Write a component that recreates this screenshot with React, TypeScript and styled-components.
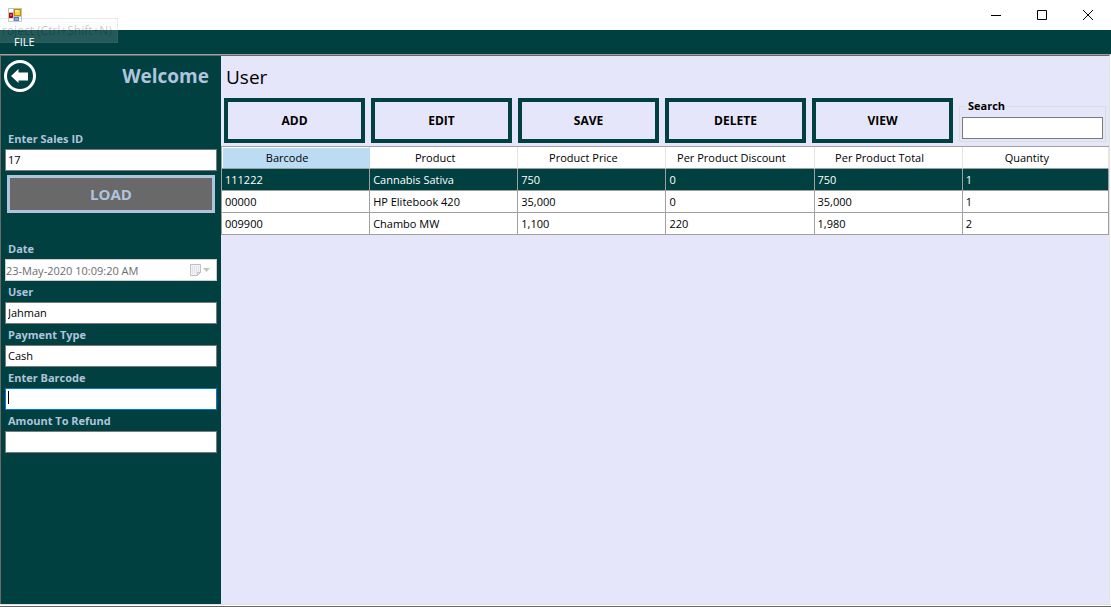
import React from "react";
import styled, { createGlobalStyle, css } from "styled-components";

const teal = "#004040";
const lavender = "#e6e6fa";
const steel = "#b0c4de";
const line = "#a0a0a0";
const font = `"Open Sans", "Noto Sans", sans-serif`;

const GlobalStyle = createGlobalStyle`
  *, *::before, *::after { box-sizing: border-box; }
  body { margin: 0; background: #fff; font-family: ${font}; font-size: 11px; color: #000; }
  button, input { font-family: inherit; font-size: inherit; border-radius: 0; }
`;

const Window = styled.div`
  position: relative;
  display: flex;
  flex-direction: column;
  min-height: 100vh;
  overflow: hidden;
`;

const TitleBar = styled.header`
  display: flex;
  align-items: center;
  justify-content: space-between;
  height: 30px;
  padding-left: 8px;
  background: #fff;
`;

const WindowControls = styled.div`
  display: flex;
`;

const WindowButton = styled.button`
  display: grid;
  place-items: center;
  width: 46px;
  height: 28px;
  padding: 0;
  border: 0;
  background: none;
`;

const MenuBar = styled.nav`
  display: flex;
  align-items: center;
  height: 24px;
  padding-left: 10px;
  background: ${teal};
`;

const MenuButton = styled.button`
  position: relative;
  z-index: 2;
  padding: 0 4px;
  border: 0;
  background: none;
  color: #fff;
  line-height: 12px;
`;

const Tooltip = styled.div`
  position: absolute;
  z-index: 1;
  top: 18px;
  left: -1px;
  width: 119px;
  height: 25px;
  padding: 6px 0 0 2px;
  border: 1px solid rgba(118, 118, 118, 0.15);
  background: rgba(242, 242, 242, 0.15);
  color: rgba(0, 0, 0, 0.22);
  font-size: 12px;
  line-height: 12px;
  white-space: nowrap;
`;

const Client = styled.div`
  flex: 1;
  display: flex;
  border-top: 1px solid ${line};
  border-right: 1px solid #fff;
`;

const Sidebar = styled.aside`
  flex: 0 0 221px;
  padding: 4px 4px 0 4px;
  border-top: 1px solid #696969;
  border-left: 1px solid #696969;
  background: ${teal};
`;

const SidebarHead = styled.div`
  display: flex;
  justify-content: space-between;
  align-items: center;
  height: 32px;
  margin-bottom: 36px;
  padding-right: 8px;
`;

const BackButton = styled.button`
  display: flex;
  margin-left: -1px;
  padding: 0;
  border: 0;
  background: none;
`;

const Welcome = styled.h1`
  margin: 0;
  color: ${steel};
  font-size: 19px;
  font-weight: 700;
  line-height: 34px;
`;

const Label = styled.label`
  display: block;
  padding-left: 3px;
  color: ${steel};
  font-size: 11px;
  font-weight: 700;
  line-height: 21px;
`;

const Field = styled.div`
  position: relative;
`;

const TextBox = styled.input<{ $active?: boolean }>`
  display: block;
  width: 100%;
  height: 22px;
  padding: 0 2px 1px;
  border: 1px solid ${(p) => (p.$active ? "#0078d7" : "#7a7a7a")};
  background: #fff;
  color: #000;
  outline: 0;
  &:disabled {
    padding: 0;
    border-color: #ccc;
    color: #6d6d6d;
    opacity: 1;
  }
`;

const Caret = styled.span`
  position: absolute;
  top: 3px;
  left: 3px;
  width: 1px;
  height: 13px;
  background: #000;
`;

const PickerIcon = styled.svg`
  position: absolute;
  top: 5px;
  right: 6px;
`;

const LoadButton = styled.button`
  display: block;
  width: calc(100% - 4px);
  height: 38px;
  margin: 4px 2px 25px;
  border: 3px solid ${steel};
  background: #696969;
  color: ${steel};
  font-size: 15px;
  font-weight: 700;
`;

const Main = styled.main`
  flex: 1;
  min-width: 0;
  border-top: 1px solid #696969;
  border-right: 1px solid #e3e3e3;
  background: ${lavender};
`;

const Heading = styled.h2`
  margin: 0;
  padding-left: 5px;
  font-size: 19px;
  font-weight: 400;
  line-height: 42px;
`;

const Toolbar = styled.div`
  display: flex;
  gap: 6px;
  padding: 0 3px;
`;

const ActionButton = styled.button`
  flex: 1 1 141px;
  height: 45px;
  padding: 0;
  border: 4px solid ${teal};
  background: ${lavender};
  color: #000;
  font-size: 12px;
  font-weight: 700;
`;

const SearchGroup = styled.fieldset`
  flex: 1 1 147px;
  min-width: 0;
  height: 44px;
  margin: 0;
  padding: 3px 2px 2px;
  border: 1px solid #dcdcdc;
`;

const Legend = styled.legend`
  margin-left: 4px;
  padding: 0 2px;
  font-size: 11px;
  font-weight: 700;
  line-height: 16px;
`;

const Grid = styled.table`
  width: 100%;
  margin-top: 3px;
  table-layout: fixed;
  border-collapse: separate;
  border-spacing: 0;
  border-top: 1px solid ${line};
  border-left: 1px solid ${line};
  background: #fff;
`;

const HeadCell = styled.th<{ $sorted: boolean }>`
  width: 16.7%;
  height: 22px;
  padding: 0 17px 0 0;
  border-right: 1px solid #e5e5e5;
  border-bottom: 1px solid ${line};
  font-weight: 400;
  line-height: 20px;
  white-space: nowrap;
  &:last-child {
    width: auto;
  }
  ${(p) =>
    p.$sorted &&
    css`
      border-right-color: #bcdcf4;
      background: #bcdcf4;
      box-shadow: inset 1px 1px #fff;
    `}
`;

const Row = styled.tr<{ $selected: boolean }>`
  background: ${(p) => (p.$selected ? teal : "#fff")};
  color: ${(p) => (p.$selected ? "#fff" : "#000")};
`;

const Cell = styled.td`
  height: 22px;
  padding: 0 3px;
  border-right: 1px solid ${line};
  border-bottom: 1px solid ${line};
  line-height: 20px;
  white-space: nowrap;
`;

const BottomEdge = styled.footer`
  height: 3px;
  border-top: 1px solid #e3e3e3;
  border-bottom: 1px solid #696969;
  background: #fff;
`;

const columns = [
  "Barcode",
  "Product",
  "Product Price",
  "Per Product Discount",
  "Per Product Total",
  "Quantity",
];

const rows = [
  ["111222", "Cannabis Sativa", "750", "0", "750", "1"],
  ["00000", "HP Elitebook 420", "35,000", "0", "35,000", "1"],
  ["009900", "Chambo MW", "1,100", "220", "1,980", "2"],
];

const AppIcon = () => (
  <svg width="14" height="14" viewBox="0 0 14 14" shapeRendering="crispEdges" aria-hidden="true">
    <rect width="14" height="14" fill="#c3c3c3" />
    <rect x="1" y="1" width="4" height="3" fill="#fff" />
    <rect x="1" y="10" width="4" height="3" fill="#fff" />
    <rect x="1" y="5" width="4" height="5" fill="#a80f10" />
    <rect x="2" y="6" width="2" height="2" fill="#e0564c" />
    <rect x="6" y="1" width="7" height="7" fill="#c58a00" />
    <rect x="7" y="2" width="5" height="5" fill="#ffd23f" />
    <rect x="7" y="2" width="3" height="2" fill="#ffe88e" />
    <rect x="6" y="9" width="5" height="4" fill="#3f73d0" />
    <rect x="7" y="10" width="3" height="2" fill="#7fa8ee" />
    <rect x="11" y="9" width="2" height="4" fill="#fff" />
  </svg>
);

const BackIcon = () => (
  <svg width="32" height="32" viewBox="0 0 32 32" aria-hidden="true">
    <circle cx="16" cy="16" r="14.5" fill="none" stroke="#fff" strokeWidth="3" />
    <path d="M7 16 14.5 9v3.5H24v8h-9.500V23z" fill="#fff" />
  </svg>
);

const CalendarIcon = () => (
  <PickerIcon width="21" height="13" viewBox="0 0 21 13" aria-hidden="true">
    <path d="M.5.5h10v8l-3 3h-7z" fill="#f4f4f4" stroke="#c4bebe" />
    <path d="M7.500 11.500v-3h3" fill="none" stroke="#c4bebe" />
    <path d="M2 3h7M2 5h7M2 7h7M2 9h5" stroke="#cdd0da" strokeDasharray="1 1" />
    <path d="M13 4h7l-3.500 4z" fill="#c4c4bc" />
  </PickerIcon>
);

export default function App() {
  return (
    <>
      <GlobalStyle />
      <Window>
        <TitleBar>
          <AppIcon />
          <WindowControls>
            <WindowButton aria-label="Minimize">
              <svg width="10" height="10"><path d="M0 5.500h10" stroke="#000" /></svg>
            </WindowButton>
            <WindowButton aria-label="Maximize">
              <svg width="10" height="10"><path d="M.5.5h9v9h-9z" fill="none" stroke="#000" /></svg>
            </WindowButton>
            <WindowButton aria-label="Close">
              <svg width="10" height="10"><path d="M0 0l10 10M10 0L0 10" stroke="#000" /></svg>
            </WindowButton>
          </WindowControls>
        </TitleBar>
        <MenuBar>
          <MenuButton>FILE</MenuButton>
        </MenuBar>
        <Tooltip>roject (Ctrl+Shift+N)</Tooltip>

        <Client>
          <Sidebar>
            <SidebarHead>
              <BackButton aria-label="Back">
                <BackIcon />
              </BackButton>
              <Welcome>Welcome</Welcome>
            </SidebarHead>

            <Label htmlFor="sales-id">Enter Sales ID</Label>
            <TextBox id="sales-id" defaultValue="17" />
            <LoadButton>LOAD</LoadButton>

            <Label htmlFor="date">Date</Label>
            <Field>
              <TextBox id="date" defaultValue="23-May-2020 10:09:20 AM" disabled />
              <CalendarIcon />
            </Field>
            <Label htmlFor="user">User</Label>
            <TextBox id="user" defaultValue="Jahman" />
            <Label htmlFor="payment">Payment Type</Label>
            <TextBox id="payment" defaultValue="Cash" />
            <Label htmlFor="barcode">Enter Barcode</Label>
            <Field>
              <TextBox id="barcode" $active />
              <Caret />
            </Field>
            <Label htmlFor="refund">Amount To Refund</Label>
            <TextBox id="refund" />
          </Sidebar>

          <Main>
            <Heading>User</Heading>
            <Toolbar>
              {["ADD", "EDIT", "SAVE", "DELETE", "VIEW"].map((name) => (
                <ActionButton key={name}>{name}</ActionButton>
              ))}
              <SearchGroup>
                <Legend>
                  <label htmlFor="search">Search</label>
                </Legend>
                <TextBox id="search" />
              </SearchGroup>
            </Toolbar>
            <Grid>
              <thead>
                <tr>
                  {columns.map((name, i) => (
                    <HeadCell key={name} $sorted={i === 0}>{name}</HeadCell>
                  ))}
                </tr>
              </thead>
              <tbody>
                {rows.map((cells, r) => (
                  <Row key={cells[0]} $selected={r === 0}>
                    {cells.map((value, i) => (
                      <Cell key={columns[i]}>{value}</Cell>
                    ))}
                  </Row>
                ))}
              </tbody>
            </Grid>
          </Main>
        </Client>
        <BottomEdge />
      </Window>
    </>
  );
}
